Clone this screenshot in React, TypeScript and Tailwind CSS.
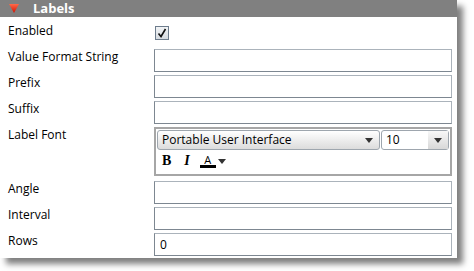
import React from "react"

const font = { fontFamily: '"Open Sans", "DejaVu Sans", sans-serif' }

function TextBox({ value = "" }: { value?: string }) {
  return (
    <div className="h-[23px] w-[298px] border border-[#abb3bb] border-l-[#7d8791] border-b-[#7d8791] bg-white px-[5px] text-[12px] leading-[22px] text-black">
      {value}
    </div>
  )
}

function Row({ label, children, last = false }: { label: string; children: React.ReactNode; last?: boolean }) {
  return (
    <div className={`flex items-start ${last ? "h-[24px]" : "h-[26px]"}`}>
      <div className="mt-[1px] w-[154px] pl-[8px] text-[12px] leading-[14px] text-black">{label}</div>
      {children}
    </div>
  )
}

function Arrow() {
  return (
    <svg width="8" height="5" viewBox="0 0 8 5">
      <path d="M0 0h8L4 5z" fill="#333" />
    </svg>
  )
}

export default function App() {
  return (
    <div className="h-[271px] w-[474px] bg-white" style={font}>
      <div className="w-[457px] bg-white shadow-[6px_6px_6px_rgba(0,0,0,0.5)]">
        <div className="flex h-[17px] items-center bg-[#808080] pl-[9px]">
          <svg width="10" height="9" viewBox="0 0 10 9">
            <defs>
              <linearGradient id="tri" x1="0" y1="0" x2="0" y2="1">
                <stop offset="0" stopColor="#ff6a4a" />
                <stop offset="1" stopColor="#d01000" />
              </linearGradient>
            </defs>
            <path d="M0 0h10L5 9z" fill="url(#tri)" />
          </svg>
          <span className="ml-[14px] text-[13px] font-bold leading-none text-white">Labels</span>
        </div>
        <div className="pb-[1px] pt-[4px]">
          <div className="flex h-[28px] items-start">
            <div className="mt-[3px] w-[154px] pl-[8px] text-[12px] leading-[14px]">Enabled</div>
            <div className="mt-[5px] ml-[1px] flex h-[14px] w-[14px] items-center justify-center border border-[#6d7c8c] bg-gradient-to-b from-[#f2f4f6] to-[#d6dbe0]">
              <svg width="10" height="10" viewBox="0 0 10 10">
                <path d="M1.5 5.5l2.5 3L8.5 1" fill="none" stroke="#111" strokeWidth="1.6" />
              </svg>
            </div>
          </div>
          <Row label="Value Format String">
            <TextBox />
          </Row>
          <Row label="Prefix">
            <TextBox />
          </Row>
          <Row label="Suffix">
            <TextBox />
          </Row>
          <div className="flex h-[54px] items-start">
            <div className="mt-[1px] w-[154px] pl-[8px] text-[12px] leading-[14px]">Label Font</div>
            <div className="h-[49px] w-[298px] border-2 border-[#a6a6a6] bg-white px-[1px] pt-[1px]">
              <div className="flex gap-[1px]">
                <div className="flex h-[20px] w-[223px] items-center justify-between rounded-[3px] border border-[#9ea6ae] bg-gradient-to-b from-[#ffffff] to-[#dcdcdc] pl-[4px] pr-[6px] text-[12px]">
                  <span>Portable User Interface</span>
                  <Arrow />
                </div>
                <div className="flex h-[20px] flex-1 items-center justify-between rounded-[3px] border border-[#9ea6ae] bg-white pl-[4px] pr-0 text-[12px]">
                  <span>10</span>
                  <div className="flex h-full w-[20px] items-center justify-center bg-gradient-to-b from-[#f8f8f8] to-[#d8d8d8]">
                    <Arrow />
                  </div>
                </div>
              </div>
              <div className="mt-[4px] flex items-center pl-[5px]">
                <span className="text-[14px] font-bold leading-none" style={{ fontFamily: '"Liberation Serif", serif' }}>
                  B
                </span>
                <span className="ml-[13px] text-[14px] font-bold italic leading-none" style={{ fontFamily: '"Liberation Serif", serif' }}>
                  I
                </span>
                <div className="ml-[10px] flex flex-col items-center">
                  <span className="text-[11px] leading-[11px]">A</span>
                  <div className="h-[3px] w-[16px] bg-black" />
                </div>
                <div className="ml-[2px] mt-[1px]">
                  <Arrow />
                </div>
              </div>
            </div>
          </div>
          <Row label="Angle">
            <TextBox />
          </Row>
          <Row label="Interval">
            <TextBox />
          </Row>
          <Row label="Rows" last>
            <TextBox value="0" />
          </Row>
        </div>
      </div>
    </div>
  )
}
